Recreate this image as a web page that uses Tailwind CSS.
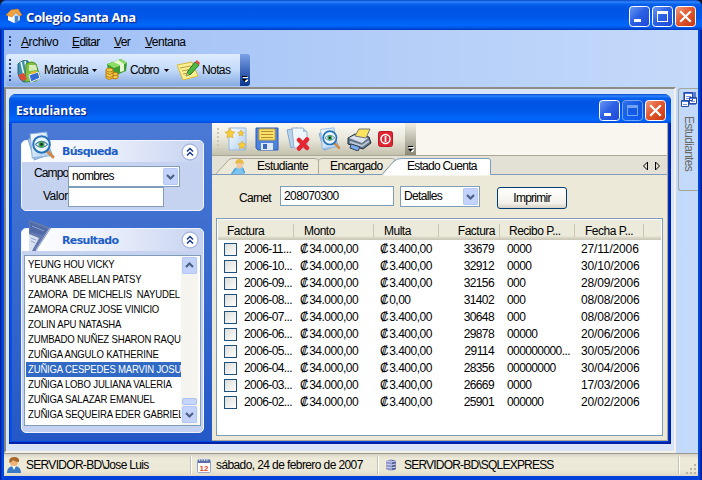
<!DOCTYPE html>
<html lang="es">
<head>
<meta charset="utf-8">
<title>Colegio Santa Ana</title>
<script src="https://cdn.jsdelivr.net/npm/@tailwindcss/browser@4"></script>
</head>
<body class="w-[702px] h-[480px] overflow-hidden bg-[#101830] font-['Liberation_Sans',sans-serif] text-[12px] leading-[15px] tracking-[-0.6px] text-black whitespace-nowrap">
<svg class="absolute w-0 h-0" aria-hidden="true">
  <defs>
    <linearGradient id="blue" x1="0" y1="0" x2="1" y2="1"><stop offset="0" stop-color="#6f9bf5"/><stop offset=".45" stop-color="#2d62e4"/><stop offset="1" stop-color="#1b48d8"/></linearGradient>
    <linearGradient id="red" x1="0" y1="0" x2="1" y2="1"><stop offset="0" stop-color="#f0a084"/><stop offset=".45" stop-color="#e2582f"/><stop offset="1" stop-color="#c8350c"/></linearGradient>
    <linearGradient id="paper" x1="0" y1="0" x2="1" y2="1"><stop offset="0" stop-color="#fff"/><stop offset="1" stop-color="#a9cdf0"/></linearGradient>
    <symbol id="min" viewBox="0 0 21 21"><rect x=".5" y=".5" width="20" height="20" rx="3" fill="url(#blue)" stroke="#fff"/><path d="M5 13h7v3H5z" fill="#fff"/></symbol>
    <symbol id="max" viewBox="0 0 21 21"><rect x=".5" y=".5" width="20" height="20" rx="3" fill="url(#blue)" stroke="#fff"/><path d="M5 5h11v11H5zM6 8v7h9V8z" fill="#fff" fill-rule="evenodd"/></symbol>
    <symbol id="close" viewBox="0 0 21 21"><rect x=".5" y=".5" width="20" height="20" rx="3" fill="url(#red)" stroke="#fff"/><path d="M6 6l9 9M15 6l-9 9" stroke="#fff" stroke-width="2.2" stroke-linecap="square"/></symbol>
    <symbol id="chev" viewBox="0 0 18 18"><circle cx="9" cy="9" r="8" fill="#fff" stroke="#a9b6dc" stroke-width="1.3"/><path d="M6 8.500l3-3 3 3M6 12.500l3-3 3 3" fill="none" stroke="#10388e" stroke-width="1.5"/></symbol>
    <symbol id="drop" viewBox="0 0 15 17"><rect width="15" height="17" rx="1.5" fill="#c3d3fb"/><rect x=".5" y=".5" width="14" height="16" rx="1.5" fill="none" stroke="#b4c8f6"/><path d="M4 7l3.500 3.500L11 7" fill="none" stroke="#4d6185" stroke-width="2.2"/></symbol>
    <symbol id="eye" viewBox="0 0 28 30"><path d="M2 8l15-6 8 20-17 6z" fill="#a9c9ea" stroke="#7fa4cf"/><path d="M4 3l16-2 3 23-17 2z" fill="url(#paper)" stroke="#8db4dd"/><path d="M20 19l6 6" stroke="#d08a4c" stroke-width="3" stroke-linecap="round"/><circle cx="15" cy="13" r="8" fill="#e8f6ff" stroke="#2773b8" stroke-width="2"/><path d="M9 13q6-6 12 0q-6 6-12 0" fill="#fff" stroke="#3e7aa8"/><circle cx="15" cy="13" r="3" fill="#44a25b"/><circle cx="15" cy="13" r="1.3" fill="#103020"/></symbol>
  </defs>
</svg>

<div class="w-[702px] h-[480px] flex flex-col rounded-t-[7px] overflow-hidden bg-[linear-gradient(90deg,#001ea0_0,#001ea0_1px,#0050e8_2px,#0040d8_4px,#0040d8_698px,#0050e8_699px,#001ea0_701px)]">
  <header class="h-[30px] shrink-0 flex items-center pl-[6px] pr-[6px] bg-[linear-gradient(180deg,#0848c8_0,#2f86fc_2px,#0a62ee_4px,#0054e3_8px,#0058ea_18px,#0068fc_25px,#005cf0_27px,#0038c0_30px)]">
    <svg class="w-[16px] h-[16px] mt-[1px]" viewBox="0 0 16 16"><path d="M2 7v5l7 3 5-3V7L8 3z" fill="#b5dbf7"/><path d="M2 7v5l6 3V8z" fill="#f6fbff"/><path d="M9 8h3v6l-3 1z" fill="#4b80c8"/><path d="M5 2l7-1 4 6-3 1-3-4-4 5-6-2z" fill="#f3a13c" stroke="#d97c1c" stroke-width=".6"/></svg>
    <h1 class="ml-[4px] mt-[4px] font-['Open_Sans',sans-serif] font-bold text-[13px] tracking-[-0.4px] text-white [text-shadow:1px_1px_1px_#0a1e80]">Colegio Santa Ana</h1>
    <div class="ml-auto mt-[3px] flex gap-[2px]">
      <svg class="w-[21px] h-[21px]"><use href="#min"/></svg>
      <svg class="w-[21px] h-[21px]"><use href="#max"/></svg>
      <svg class="w-[21px] h-[21px]"><use href="#close"/></svg>
    </div>
  </header>

  <div class="mx-[4px] h-[446px] flex flex-col bg-[linear-gradient(90deg,#9ebef5,#c4dafa)]">
    <nav class="h-[24px] shrink-0 flex items-center pl-[5px]">
      <div class="w-[2px] h-[12px] bg-[repeating-linear-gradient(180deg,#27418c_0_2px,transparent_2px_4px)]"></div>
      <span class="ml-[10px] w-[51px] tracking-[-0.4px]"><u>A</u>rchivo</span>
      <span class="w-[42px] tracking-[-0.6px]"><u>E</u>ditar</span>
      <span class="w-[31px]"><u>V</u>er</span>
      <span class="tracking-[-0.5px]"><u>V</u>entana</span>
    </nav>
    <div class="h-[33px] shrink-0 pl-[2px] flex">
      <div class="w-[234px] h-[32px] rounded-l-[3px] flex items-center pl-[3px] bg-[linear-gradient(180deg,#dfecfe,#c3daf9_50%,#86abe2)]">
        <div class="w-[2px] h-[23px] bg-[repeating-linear-gradient(180deg,#27418c_0_2px,transparent_2px_4px)]"></div>
        <svg class="ml-[6px] w-[24px] h-[25px]" viewBox="0 0 24 25"><path d="M5 5q4-6 9-2l4 3" fill="none" stroke="#dff2f0" stroke-width="2"/><path d="M1 6q5-5 10-3l3 19-7 2q-5-2-6-9z" fill="#3e91a8" stroke="#266583"/><path d="M4 4l4 18M8 3l3 18" stroke="#e7f5ef" stroke-width="1.6"/><path d="M9 6q6-4 10 0l4 13-4 4-11 1z" fill="#83bf40" stroke="#4d8b24"/><path d="M12 7l7 0 1 5-8 1z" fill="#d6edb9"/><path d="M12 17l9-3 2 6-9 4z" fill="#376bd7" stroke="#eef5ff"/><path d="M1 17l6-2 3 6-5 2z" fill="#df4b36"/><path d="M14 15l5-1" stroke="#f2b82d" stroke-width="2"/></svg>
        <span class="ml-[3px] w-[45px] tracking-[-0.5px]">Matricula</span>
        <svg class="ml-[3px] w-[5px] h-[3px]" viewBox="0 0 5 3"><path d="M0 0h5L2.500 3z"/></svg>
        <svg class="ml-[8px] w-[23px] h-[22px]" viewBox="0 0 23 22"><path d="M2 5l14-5 6 4-1 8-12 5-6-5z" fill="#3b9d31"/><path d="M2 5l14-5 6 4-13 5z" fill="#8ddc66"/><path d="M8 3l7 3v7l4-1V5l-6-4z" fill="#e7f8d2"/><g fill="#f5cc4a" stroke="#b97c16"><path d="M7 15v4q3 2 6 0v-4z"/><ellipse cx="10" cy="15" rx="3" ry="1.500"/><path d="M1 11v8q3 3 7 0v-8z"/><ellipse cx="4.500" cy="11" rx="3.500" ry="2"/><path d="M1 14q4 3 7 0M1 17q4 3 7 0" fill="none"/></g></svg>
        <span class="ml-[2px] w-[31px] tracking-[-0.8px]">Cobro</span>
        <svg class="ml-[3px] w-[5px] h-[3px]" viewBox="0 0 5 3"><path d="M0 0h5L2.500 3z"/></svg>
        <svg class="ml-[8px] w-[23px] h-[21px]" viewBox="0 0 23 21"><path d="M0 5l15-3 6 14-15 4z" fill="#fbef92" stroke="#d8b83a"/><path d="M3 8l11-2M5 11l10-2M6 14l10-2" stroke="#b69b45"/><path d="M9 16l2-5 7-9 4 3-8 9z" fill="#4eb842" stroke="#267525"/><path d="M18 2l2-2 3 3-1 2z" fill="#e4503f"/><path d="M9 16l1-3 2 2z" fill="#edc082"/></svg>
        <span class="ml-[2px] tracking-[-0.6px]">Notas</span>
      </div>
      <div class="w-[10px] h-[32px] rounded-r-[3px] flex flex-col items-center justify-end pb-[3px] bg-[linear-gradient(180deg,#7ba2e7,#083590)]">
        <svg class="w-[6px] h-[7px]" viewBox="0 0 6 7"><path d="M1 1.500h5M2 4h4L4 6z" fill="#fff" stroke="#fff"/><path d="M0 .500h5" stroke="#000"/><path d="M0 3h5L2.500 5.500z"/></svg>
      </div>
    </div>

    <div class="h-[366px] shrink-0 flex">
      <main class="w-[672px] pl-[3px] pt-[5px] border-t-2 border-l-2 border-t-[#8d8d84] border-l-[#85857d] border-r-2 border-b-2 border-r-[#f4f2e8] border-b-[#f4f2e8] bg-[#d8e4f8]">
        <section class="w-[662px] h-[350px] flex flex-col rounded-t-[7px] overflow-hidden bg-[linear-gradient(90deg,#0030c8_0,#0858f0_2px,#0048e0_3px,#0048e0_658px,#0020a8_661px)] border-b-2 border-[#0020a8]">
          <header class="h-[29px] shrink-0 flex items-center pl-[7px] pr-[5px] bg-[linear-gradient(180deg,#0848c8_0,#2f86fc_2px,#0a62ee_4px,#0054e3_8px,#0058ea_18px,#0068fc_25px,#0060f4_27px,#0048d8_29px)]">
            <h2 class="mt-[4px] font-['Open_Sans',sans-serif] font-bold text-[12px] tracking-[0px] text-white [text-shadow:1px_1px_1px_#0a1e80]">Estudiantes</h2>
            <div class="ml-auto mt-[3px] flex gap-[2px]">
              <svg class="w-[21px] h-[21px]"><use href="#min"/></svg>
              <svg class="w-[21px] h-[21px] opacity-45"><use href="#max"/></svg>
              <svg class="w-[21px] h-[21px]"><use href="#close"/></svg>
            </div>
          </header>
          <div class="mx-[3px] h-[318px] shrink-0 flex">
            <aside class="w-[200px] shrink-0 pl-[9px] pt-[17px] bg-[linear-gradient(180deg,#4a7ad4,#2458c6)]">
              <section class="w-[183px] h-[71px] rounded-[5px] border border-[#f0f4ff] bg-[#c6d3f0]">
                <header class="relative h-[21px] flex items-center rounded-t-[4px] pl-[40px] pr-[4px] bg-[linear-gradient(90deg,#fff,#f2f5fd_35%,#c6d3f0)]">
                  <svg class="absolute left-[4px] -top-[10px] w-[29px] h-[31px]"><use href="#eye"/></svg>
                  <h3 class="font-['DejaVu_Sans',sans-serif] font-bold text-[11px] tracking-[-0.7px] text-[#215dc6]">Búsqueda</h3>
                  <svg class="ml-auto w-[18px] h-[18px]"><use href="#chev"/></svg>
                </header>
                <div class="pl-[12px] pt-[4px]">
                  <div class="flex h-[21px]">
                    <span class="w-[34px] tracking-[-0.9px]">Campo</span>
                    <div class="w-[112px] h-[21px] border border-[#7f9db9] bg-white flex items-center justify-between pl-[3px] pr-[1px]"><span class="tracking-[-0.7px]">nombres</span><svg class="w-[15px] h-[17px]"><use href="#drop"/></svg></div>
                  </div>
                  <div class="flex h-[20px]">
                    <span class="w-[34px] pt-[2px] pl-[9px] tracking-[-0.5px]">Valor</span>
                    <div class="w-[96px] h-[20px] border border-[#7f9db9] bg-white"></div>
                  </div>
                </div>
              </section>
              <section class="mt-[17px] w-[183px] h-[205px] rounded-[5px] border border-[#f0f4ff] bg-[#c6d3f0]">
                <header class="relative h-[22px] flex items-center rounded-t-[4px] pl-[40px] pr-[4px] bg-[linear-gradient(90deg,#fff,#f2f5fd_35%,#c6d3f0)]">
                  <svg class="absolute left-[7px] -top-[9px] w-[22px] h-[31px]" viewBox="0 0 22 31"><path d="M0 0l12 4 10 4L7 31H0z" fill="#6479ae"/><path d="M1 2l18 7-5 6L1 12z" fill="#506aa8"/><path d="M0 14l10 4-7 13H0z" fill="#dae2f2"/><path d="M21 8L7 30" stroke="#b3c1df"/><path d="M3 6l12 5M2 18l5 2M2 21l4 2" stroke="#8da0cc"/></svg>
                  <h3 class="font-['DejaVu_Sans',sans-serif] font-bold text-[11px] tracking-[-0.65px] text-[#215dc6]">Resultado</h3>
                  <svg class="ml-auto w-[18px] h-[18px]"><use href="#chev"/></svg>
                </header>
                <div class="ml-[2px] mt-[4px] w-[177px] h-[171px] border border-[#7f9db9] bg-white flex">
                  <ul id="names" class="w-[156px] shrink-0 pt-[1px] overflow-hidden text-[11px] tracking-[-0.2px]"></ul>
                  <div class="w-[17px] mt-[1px] flex flex-col items-center bg-[#f5f4ee]">
                    <svg class="w-[15px] h-[17px] rotate-180"><use href="#drop"/></svg>
                    <div class="mt-[124px] w-[15px] h-[7px] rounded-[2px] border border-[#a9c0f4] bg-[#c6d5fc]"></div>
                    <svg class="mt-px w-[15px] h-[17px]"><use href="#drop"/></svg>
                  </div>
                </div>
              </section>
            </aside>

            <article class="w-[456px] flex flex-col bg-[#ece9d8] border-r border-b border-[#aca899]">
              <div class="h-[33px] shrink-0 flex bg-[#f9f6ef] border-b border-[#aca899]">
                <div class="w-[193px] h-[32px] flex items-center pl-[5px] bg-[linear-gradient(180deg,#faf9f4,#e9e7da_50%,#c3c0ac)]">
                  <div class="w-[2px] h-[23px] bg-[repeating-linear-gradient(180deg,#c9c6b8_0_2px,transparent_2px_4px)]"></div>
                  <svg class="ml-[6px] w-[23px] h-[24px]" viewBox="0 0 23 24"><path d="M4 1h17v22H4z" fill="url(#paper)" stroke="#96b7dd"/><g fill="#f8cc3a" stroke="#daa224" stroke-width=".6"><path d="M5 1l1.500 3.500L10 5 7.500 7.500 8 11 5 9.500 2 11l.5-3.500L0 5l3.500-.5z"/><path d="M16 3l1 2 2 .5L17.500 7l.3 2-1.800-1-1.800 1 .3-2L13 5.500l2-.5zM17 14l1.300 2.500 2.700.5-2 2 .5 3-2.500-1.500-2.500 1.500.5-3-2-2 2.700-.5z"/></g></svg>
                  <svg class="ml-[7px] w-[24px] h-[24px]" viewBox="0 0 24 24"><path d="M1 1h22v22H3l-2-2z" fill="#4e82dc" stroke="#2c5cb8"/><path d="M4 2h16v11H4z" fill="#fbe36b" stroke="#caa432"/><path d="M6 4.500h12M6 7.500h12M6 10.500h12" stroke="#b78c2c"/><path d="M6 16h12v7H6z" fill="#dde9f6"/><path d="M8 17h4v5H8z" fill="#3766bc"/></svg>
                  <svg class="ml-[7px] w-[24px] h-[24px]" viewBox="0 0 24 24"><path d="M1 3l10-2 4 16-10 4z" fill="#b9d3ee" stroke="#84a6cd"/><path d="M6 1h11l4 4v16H8z" fill="#eef5fb" stroke="#95aec5"/><path d="M17 1v4h4" fill="#a8c3e2"/><path d="M13 13l8 8M21 12.500l-8 9" stroke="#e32630" stroke-width="4.500" stroke-linecap="round"/></svg>
                  <svg class="ml-[7px] w-[24px] h-[25px]"><use href="#eye"/></svg>
                  <svg class="ml-[6px] w-[25px] h-[24px]" viewBox="0 0 25 24"><path d="M1 11l7-4 14 3 2 6-8 6L1 17z" fill="#64748a" stroke="#25303c"/><path d="M2 11l6-3 13 3-6 5z" fill="#dbe4ec"/><path d="M12 2l11 0-4 9-11-2z" fill="#fbe35d" stroke="#777"/><path d="M3 15l12 4 7-5" fill="none" stroke="#b9c7d6" stroke-width="2"/><path d="M4 17l9 3-2 4-8-3z" fill="#79aaf0" stroke="#33414f"/></svg>
                  <svg class="ml-[6px] w-[15px] h-[16px]" viewBox="0 0 15 16"><rect x=".5" y=".5" width="14" height="15" rx="2" fill="#e32531" stroke="#b21a26"/><circle cx="7.500" cy="8" r="4.500" fill="none" stroke="#fff" stroke-width="1.500"/><path d="M7.500 5v6" stroke="#fff" stroke-width="1.700"/></svg>
                </div>
                <div class="w-[11px] flex flex-col items-center justify-end pb-[2px] bg-[linear-gradient(180deg,#f0eee4,#8b8875)]">
                  <svg class="w-[6px] h-[7px]" viewBox="0 0 6 7"><path d="M1 1.500h5M2 4h4L4 6z" fill="#fff" stroke="#fff"/><path d="M0 .500h5" stroke="#000"/><path d="M0 3h5L2.500 5.500z"/></svg>
                </div>
              </div>

              <div class="relative h-[19px] shrink-0 bg-[#e3e1d5]">
                <svg class="absolute inset-0 w-[455px] h-[20px]" viewBox="0 0 455 20"><path d="M3 19L17 3.500Q19 2.500 22 2.500H103Q106.500 2.500 106.500 5V19" fill="#ece9d8" stroke="#aca899"/><path d="M106.500 19V5Q107 2.500 110 2.500H180Q183 2.500 183 5V19" fill="#ece9d8" stroke="#aca899"/><path d="M171 19.500L183 5Q186 2.500 190 2.500H275Q278.500 2.500 278.500 5V19.500z" fill="#fff"/><path d="M0 18.500H170L182 5Q185 2.500 190 2.500H276Q278.500 2.500 278.500 5V18.500H455" fill="none" stroke="#7f9db9"/><path d="M435.500 6v8l-4-4zM443.500 6v8l4-4z" fill="none" stroke="#000"/></svg>
                <div class="relative h-[19px] flex items-center pl-[18px] pt-[2px]">
                  <svg class="w-[16px] h-[15px]" viewBox="0 0 16 16"><path d="M2 16l1-5 5-3h5l2 8z" fill="#7cc4ee"/><path d="M6 3q4-4 7 0v5q-3 4-6 1z" fill="#f5c69c"/><path d="M5 5q0-5 5-5 5 1 4 6-2-3-8-1z" fill="#e5bc48"/><path d="M1 16l5-6M13 10l2 5" stroke="#4da0d8" stroke-width="1.600"/></svg>
                  <span class="ml-[11px] w-[73px] tracking-[-0.55px]">Estudiante</span>
                  <span class="w-[77px] tracking-[-0.6px]">Encargado</span>
                  <span class="tracking-[-0.75px]">Estado Cuenta</span>
                </div>
              </div>

              <div class="h-[43px] shrink-0 flex pt-[11px] pl-[27px]">
                <span class="w-[41px] pt-[5px] tracking-[-0.7px]">Carnet</span>
                <div class="w-[114px] h-[20px] border border-[#7f9db9] bg-white pl-[3px] pt-[2px]">208070300</div>
                <div class="ml-[6px] w-[80px] h-[21px] border border-[#7f9db9] bg-white flex items-center justify-between pl-[3px] pr-[1px]"><span class="tracking-[-0.65px]">Detalles</span><svg class="w-[15px] h-[17px]"><use href="#drop"/></svg></div>
                <div class="ml-[17px] mt-[1px] w-[70px] h-[22px] rounded-[3px] border border-[#003c74] bg-[linear-gradient(180deg,#fff,#f3f1ea_75%,#d8d2c4)] flex items-center justify-center tracking-[-0.75px]">Imprimir</div>
              </div>

              <div class="ml-[4px] w-[447px] h-[218px] border border-[#7f9db9] bg-white p-[1px]">
                <div class="h-[20px] flex items-center bg-[linear-gradient(180deg,#ebeadb_16px,#d6d2c2_18px,#cbc7b8)] tracking-[-0.5px] [&>div]:h-[13px] [&>div]:border-r [&>div]:border-[#c7c5b2] [&>div]:leading-[15px]">
                  <div class="w-[76px] pl-[9px]">Factura</div>
                  <div class="w-[80px] pl-[10px]">Monto</div>
                  <div class="w-[65px] pl-[10px]">Multa</div>
                  <div class="w-[61px] pr-[4px] text-right">Factura</div>
                  <div class="w-[75px] pl-[9px]">Recibo P...</div>
                  <div class="w-[69px] pl-[10px]">Fecha P...</div>
                </div>
                <div id="rows"></div>
              </div>
            </article>
          </div>
        </section>
      </main>
      <aside class="w-[22px] pl-[2px] pt-[1px]">
        <div class="w-[20px] h-[103px] flex flex-col items-center pt-[3px] rounded-l-[3px] border border-r-0 border-[#a3a79f]">
          <svg class="w-[16px] h-[15px]" viewBox="0 0 16 15"><path d="M2 0h13v13H2z" fill="#5b7fd0"/><g fill="#fff" stroke="#2948a0"><path d="M3.500.500h8v8h-8zM8.500 5.500h7v6h-7zM.500 8.500h7v6h-7z"/></g><path d="M4 1.500h7M9 6.500h6M1 9.500h6" stroke="#4976dc"/><path d="M5 4.500h5M5 6.500h3M10 9.500h4M2 12.500h4" stroke="#7194e4"/></svg>
          <span class="mt-[9px] [writing-mode:vertical-rl] text-[12px] tracking-[-0.7px] text-[#6a6a64]">Estudiantes</span>
        </div>
      </aside>
    </div>

    <footer class="h-[23px] shrink-0 flex items-center border-t border-[#9c998c] bg-[linear-gradient(180deg,#d6d2c4_0,#ece9d8_4px,#ece9d8_16px,#ddd9c9)]">
      <svg class="ml-[3px] w-[14px] h-[16px]" viewBox="0 0 14 16"><path d="M0 16q0-7 7-7t7 7z" fill="#3979c5"/><path d="M5 9l2 4 2-4z" fill="#fff"/><circle cx="7" cy="5" r="4" fill="#f0b478"/><path d="M2.500 6Q1 0 7 0q6 0 5 5-4 0-6-2-1 2-3.500 3z" fill="#a8672c"/></svg>
      <span class="ml-[5px] w-[164px] tracking-[-0.7px]">SERVIDOR-BD\Jose Luis</span>
      <div class="w-[2px] h-[18px] border-l border-[#c6c2b1] border-r border-r-white"></div>
      <svg class="ml-[5px] w-[14px] h-[15px]" viewBox="0 0 14 15"><rect x=".5" y="1.500" width="13" height="13" rx="1" fill="#fff" stroke="#98a6c5"/><path d="M1 2h12v3H1z" fill="#5c6fa7"/><path d="M2.500 0v3M5 0v3M7.500 0v3M10 0v3" stroke="#d2d8e9"/><text x="7" y="13" text-anchor="middle" font-size="8" font-weight="700" letter-spacing="0" fill="#e4481c">12</text></svg>
      <span class="ml-[5px] w-[161px] tracking-[-0.6px]">sábado, 24 de febrero de 2007</span>
      <div class="w-[2px] h-[18px] border-l border-[#c6c2b1] border-r border-r-white"></div>
      <svg class="ml-[7px] w-[10px] h-[12px]" viewBox="0 0 10 12"><path d="M0 2q5-3 10 0v8q-5 3-10 0z" fill="#8d96c8"/><path d="M6 1q2 0 4 1v8q-2 1-4 1z" fill="#585f98"/><path d="M0 2q5 2 10 0M0 5q5 2 10 0M0 8q5 2 10 0" fill="none" stroke="#ccd2ee"/></svg>
      <span class="ml-[8px] w-[274px] tracking-[-0.8px]">SERVIDOR-BD\SQLEXPRESS</span>
      <div class="w-[2px] h-[18px] border-l border-[#c6c2b1] border-r border-r-white"></div>
      <svg class="ml-auto mt-[9px] w-[12px] h-[12px]" viewBox="0 0 12 12"><path d="M8 0h2v2H8zM4 4h2v2H4zM8 4h2v2H8zM0 8h2v2H0zM4 8h2v2H4zM8 8h2v2H8z" fill="#b8b4a2"/></svg>
    </footer>
  </div>
</div>
<script>
const names = ["YEUNG HOU VICKY","YUBANK ABELLAN PATSY","ZAMORA\u00a0 DE MICHELIS\u00a0 NAYUDEL","ZAMORA CRUZ JOSE VINICIO","ZOLIN APU NATASHA","ZUMBADO NUÑEZ SHARON RAQU","ZUÑIGA ANGULO KATHERINE","ZUÑIGA CESPEDES MARVIN JOSU","ZUÑIGA LOBO JULIANA VALERIA","ZUÑIGA SALAZAR EMANUEL","ZUÑIGA SEQUEIRA EDER GABRIEL"];
document.getElementById("names").innerHTML = names.map((n, i) =>
  `<li class="h-[15px] ml-[1px] pl-[2px] ${i === 7 ? "bg-[#316ac5] text-white" : ""}"><span class="inline-block origin-left scale-x-[0.868]">${n}</span></li>`).join("");
const rows = [["11","3.400,00","33679","0000","27/11/2006"],["10","3.400,00","32912","0000","30/10/2006"],["09","3.400,00","32156","000","28/09/2006"],["08","0,00","31402","000","08/08/2006"],["07","3.400,00","30648","000","08/08/2006"],["06","3.400,00","29878","00000","20/06/2006"],["05","3.400,00","29114","000000000...","30/05/2006"],["04","3.400,00","28356","00000000","30/04/2006"],["03","3.400,00","26669","0000","17/03/2006"],["02","3.400,00","25901","000000","20/02/2006"]];
document.getElementById("rows").innerHTML = rows.map(r =>
  `<div class="h-[17px] flex items-center pl-[6px] pt-[1px]">
    <div class="w-[13px] h-[13px] border border-[#1c5180] bg-linear-to-br from-[#dcdcd7] to-white"></div>
    <span class="ml-[7px] w-[56px]">2006-${r[0]}...</span>
    <span class="w-[80px] tracking-[-0.5px]"><span class="mr-[1px]">₡</span>34.000,00</span>
    <span class="w-[54px] tracking-[-0.5px]"><span class="mr-[1px]">₡</span>${r[1]}</span>
    <span class="w-[60px] text-right">${r[2]}</span>
    <span class="ml-[13px] w-[74px] tracking-[-0.6px]">${r[3]}</span>
    <span class="tracking-[-0.15px]">${r[4]}</span>
  </div>`).join("");
</script>
</body>
</html>
